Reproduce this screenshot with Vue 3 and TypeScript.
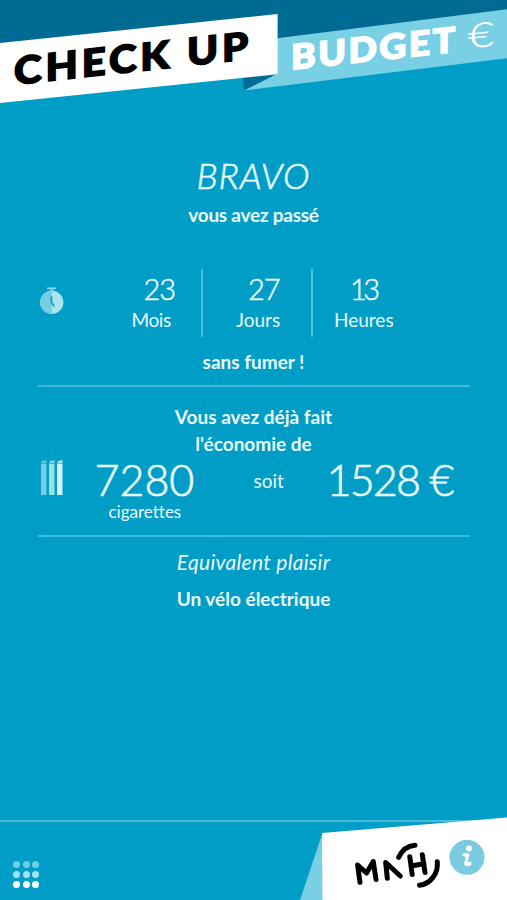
<script setup lang="ts">
interface Duration {
  value: string
  unit: string
  kind: string
}

const durations: Duration[] = [
  { value: '23', unit: 'Mois', kind: 'months' },
  { value: '27', unit: 'Jours', kind: 'days' },
  { value: '13', unit: 'Heures', kind: 'hours' },
]
const dots: string[] = ['dim', 'dim', 'dim', 'mid', 'mid', 'mid', 'full', 'full', 'full']
</script>

<template>
  <div class="screen">
    <header class="banner">
      <svg width="507" height="110" viewBox="0 0 507 110">
        <path class="deep" d="M0 0H507V20L278 50L0 60Z" />
        <path class="sky" d="M277 38.3L507 9.3V58.3L244 90.5L277 74Z" />
        <path class="deep" d="M243 77L277 73.5L244 90.5Z" />
        <path class="white" d="M0 43L277.6 14V74.3L0 103Z" />
        <text class="title" transform="matrix(1.1 -.1199 0 1 14 84.7)" textLength="213">CHECK UP</text>
        <text class="subtitle" transform="matrix(1.08 -.1177 0 1 291 69.8)" textLength="152">BUDGET</text>
        <text class="euro" transform="matrix(1 -.109 0 1 468 48.5)" textLength="26" lengthAdjust="spacingAndGlyphs">€</text>
      </svg>
    </header>

    <main class="content">
      <h1 class="bravo">BRAVO</h1>
      <p class="strong passed">vous avez passé</p>

      <section class="time">
        <svg class="watch" width="26" height="28" viewBox="0 0 26 28">
          <path d="M8 1.3H17" stroke="#8bdbeb" stroke-width="1.7" />
          <path d="M12.7 2V4" stroke="#74cadf" stroke-width="3" />
          <circle cx="12.8" cy="15.3" r="11.6" fill="#a9e5f0" />
          <path d="M12.8 3.7A11.6 11.6 0 0 0 12.8 26.9Z" fill="#75cfe2" />
          <path d="M12.4 10V15.2L15 18.8" fill="none" stroke="#169fbe" stroke-width="1.8" stroke-linecap="round" />
        </svg>
        <div v-for="d in durations" :key="d.unit" class="duration" :class="d.kind">
          <span class="value">{{ d.value }}</span>
          <span class="unit">{{ d.unit }}</span>
        </div>
      </section>
      <p class="strong smoke">sans fumer !</p>

      <section class="savings">
        <p class="strong saved">Vous avez déjà fait<br />l'économie de</p>
        <div class="amounts">
          <svg class="sticks" width="24" height="38" viewBox="0 0 24 38">
            <g fill="#72cee3"><path d="M1 5H6.5V36H1Z" /><path d="M1 4.6L2 2L6.5 1V4.6Z" opacity=".8" /></g>
            <g fill="#9be0ed"><path d="M9 5H14.5V36H9Z" /><path d="M9 4.6L10 2L14.5 1V4.6Z" opacity=".8" /></g>
            <g fill="#cff6fb"><path d="M17 5H22.5V36H17Z" /><path d="M17 4.6L18 2L22.5 1V4.6Z" opacity=".8" /></g>
          </svg>
          <div class="count">
            <span class="big">7280</span>
            <span class="caption">cigarettes</span>
          </div>
          <span class="or">soit</span>
          <span class="big money">1528 €</span>
        </div>
      </section>

      <section class="treat">
        <p class="equivalent">Equivalent plaisir</p>
        <p class="strong bike">Un vélo électrique</p>
      </section>
    </main>

    <footer class="bar">
      <div class="menu">
        <i v-for="(d, i) in dots" :key="i" :class="d"></i>
      </div>
      <svg class="corner" width="207" height="84" viewBox="0 0 207 84">
        <path class="sky" d="M22.5 17L0 84H24Z" />
        <path class="white" d="M22 17L207 1.5V84H22.5Z" />
        <g class="logo">
          <path d="M60 66.3L57.6 49L66.5 57L73.3 45.5L76 63.5" />
          <path d="M87.3 62.3L85.7 46.5L100.3 60" />
          <path d="M109.8 40.8L112.2 58.5M111 50L124 47.8M122.3 38.7L125 56.5" />
          <path d="M98.7 41.3C102 34 107 29.8 115 29.2" />
          <path d="M119.5 69.3C130 68 138.5 58 137.3 45.7" />
        </g>
        <circle cx="167" cy="41.3" r="17.5" fill="#7acbe0" />
        <circle cx="169" cy="32.5" r="2.9" fill="#fff" />
        <path d="M164 38.8H167.8L166 46.5C165.6 49 167 49.2 170 47.5" fill="none" stroke="#fff" stroke-width="3.2" stroke-linecap="round" stroke-linejoin="round" />
      </svg>
    </footer>
  </div>
</template>

<style>
body {
  background: #009dc6;
}
</style>

<style scoped>
.screen {
  width: 507px;
  height: 900px;
  display: flex;
  flex-direction: column;
  overflow: hidden;
  background: #009dc6;
  color: #e9fbff;
  font-family: Lato, 'Liberation Sans', sans-serif;
}
h1,
p {
  margin: 0;
}
svg {
  display: block;
}
.banner {
  height: 110px;
}
.deep { fill: #006b92; }
.sky { fill: #79cfe4; }
.white { fill: #fff; }
.title {
  font-size: 38px;
  font-weight: 900;
  fill: #000;
  stroke: #000;
  stroke-width: 1.6;
}
.subtitle {
  font-size: 34.5px;
  font-weight: 900;
  fill: #fff;
  stroke: #fff;
  stroke-width: 1.6;
}
.euro {
  font-size: 34px;
  font-weight: 300;
  fill: #fff;
  stroke: #fff;
  stroke-width: 0.4;
}
.content {
  height: 710px;
  display: flex;
  flex-direction: column;
  align-items: center;
}
.bravo {
  margin-top: 45px;
  height: 40px;
  line-height: 40px;
  font-size: 36px;
  font-weight: 300;
  font-style: italic;
  letter-spacing: 0.9px;
  -webkit-text-stroke: 0.6px currentColor;
}
.strong {
  font-size: 19px;
  font-weight: 700;
  text-align: center;
}
.passed {
  margin-top: 7px;
  height: 26px;
  line-height: 26px;
  letter-spacing: -0.25px;
}
.time {
  width: 432px;
  height: 68px;
  margin-top: 41px;
  display: grid;
  grid-template-columns: 64px 101.5px 110px 156.5px;
}
.watch {
  margin-top: 18px;
  margin-left: 1px;
}
.duration {
  display: flex;
  flex-direction: column;
  border-right: 2px solid #4fbfda;
}
.hours {
  border-right: 0;
}
.value {
  height: 36px;
  margin-top: 2px;
  line-height: 36px;
  font-size: 29px;
  font-weight: 300;
  letter-spacing: -1px;
  -webkit-text-stroke: 0.5px currentColor;
}
.unit {
  height: 24px;
  margin-top: 1px;
  line-height: 24px;
  font-size: 19px;
}
.months { padding-left: 30px; }
.days { padding-left: 33px; }
.hours { padding-left: 21px; }
.months .value { padding-left: 12px; }
.days .value { padding-left: 12px; }
.hours .value { padding-left: 16px; letter-spacing: -3.5px; }
.months .unit { letter-spacing: -0.4px; }
.smoke {
  margin-top: 12px;
  height: 26px;
  line-height: 26px;
}
.savings {
  box-sizing: border-box;
  width: 432px;
  height: 152px;
  margin-top: 10px;
  border-top: 2px solid #41b8d7;
  border-bottom: 2px solid #41b8d7;
}
.saved {
  padding-top: 16px;
  line-height: 27px;
}
.amounts {
  display: grid;
  grid-template-columns: 57px 159px 74px 1fr;
  height: 76px;
}
.sticks {
  margin-top: 2px;
  margin-left: 2px;
}
.count {
  display: flex;
  flex-direction: column;
}
.big {
  height: 46px;
  line-height: 46px;
  font-size: 43px;
  font-weight: 300;
  white-space: nowrap;
  -webkit-text-stroke: 0.7px currentColor;
}
.money {
  margin-left: -1px;
  letter-spacing: -1.8px;
  word-spacing: 0.5px;
}
.caption {
  padding-left: 14px;
  line-height: 18px;
  font-size: 17px;
  font-variant-ligatures: none;
}
.or {
  line-height: 47px;
  font-size: 19px;
}
.equivalent {
  margin-top: 12px;
  line-height: 26px;
  font-size: 21px;
  font-style: italic;
  font-weight: 400;
  text-align: center;
  letter-spacing: 0.3px;
}
.bike {
  margin-top: 11px;
  line-height: 26px;
}
.bar {
  height: 80px;
  box-sizing: border-box;
  border-top: 2px solid #4bbcd9;
  display: flex;
  justify-content: space-between;
  align-items: flex-end;
}
.menu {
  display: grid;
  grid-template-columns: repeat(3, 7px);
  gap: 3px 2.5px;
  padding: 0 0 12px 13px;
}
.menu i {
  width: 7px;
  height: 7px;
  border-radius: 50%;
}
.dim { background: #70cde3; }
.mid { background: #a3e3ef; }
.full { background: #fff; }
.logo {
  fill: none;
  stroke: #000;
  stroke-width: 5;
  stroke-linecap: round;
  stroke-linejoin: round;
}
</style>
